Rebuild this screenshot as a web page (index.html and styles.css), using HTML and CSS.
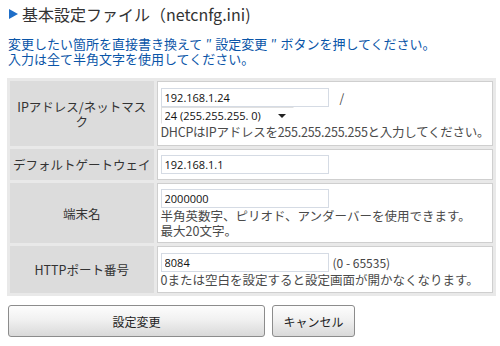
FILE: index.html
```html
<!DOCTYPE html>
<html lang="ja">
<head>
<meta charset="utf-8">
<link rel="stylesheet" href="styles.css">
</head>
<body>
<h1 class="title"><span class="tri"></span>基本設定ファイル（netcnfg.ini)</h1>
<p class="lead">変更したい箇所を直接書き換えて<span class="q">″</span>設定変更<span class="q">″</span>ボタンを押してください。<br>入力は全て半角文字を使用してください。</p>
<table class="form">
  <tr class="r-ip">
    <th>IPアドレス/ネットマス<br>ク</th>
    <td>
      <div class="line"><input class="txt" type="text" value="192.168.1.24"><span class="slash">/</span></div>
      <div class="line"><span class="sel"><select><option>24 (255.255.255. 0)</option></select><span class="arrow"></span></span></div>
      <div class="hint tight">DHCPはIPアドレスを255.255.255.255と入力してください。</div>
    </td>
  </tr>
  <tr class="r-gw">
    <th>デフォルトゲートウェイ</th>
    <td><div class="line"><input class="txt" type="text" value="192.168.1.1"></div></td>
  </tr>
  <tr class="r-name">
    <th>端末名</th>
    <td>
      <div class="line"><input class="txt" type="text" value="2000000"></div>
      <div class="hint">半角英数字、ピリオド、アンダーバーを使用できます。<br>最大20文字。</div>
    </td>
  </tr>
  <tr class="r-port">
    <th>HTTPポート番号</th>
    <td>
      <div class="line"><input class="txt" type="text" value="8084"><span class="range">(0 - 65535)</span></div>
      <div class="hint">0または空白を設定すると設定画面が開かなくなります。</div>
    </td>
  </tr>
</table>
<div class="buttons">
  <button class="btn btn-main" type="button">設定変更</button>
  <button class="btn btn-cancel" type="button">キャンセル</button>
</div>
</body>
</html>
```
FILE: styles.css
```css
* { box-sizing: border-box; }
html, body { margin: 0; background: #fff; }
body {
  padding: 4px 8px 0 8px;
  font-family: "Noto Sans CJK JP", "Noto Sans", sans-serif;
  color: #333;
}
.title {
  margin: 0;
  font-size: 16px;
  line-height: 20px;
  font-weight: normal;
  color: #333;
  display: flex;
  align-items: center;
}
.tri {
  width: 0; height: 0;
  border-top: 5px solid transparent;
  border-bottom: 5px solid transparent;
  border-left: 9px solid #1e6ec8;
  margin: 0 4px 0 1px;
}
.lead {
  margin: 12px 0 0 0;
  font-size: 13px;
  line-height: 15px;
  color: #0a55a8;
}
.q {
  display: inline-block;
  width: 13px;
  text-align: center;
}
.form {
  margin-top: 12px;
  width: 485px;
  border-collapse: separate;
  border-spacing: 3px;
  background: #e9e9e9;
  margin-left: -1px;
}
.form th {
  width: 146px;
  background: #dcdcdc;
  font-weight: normal;
  font-size: 12.5px;
  line-height: 15px;
  color: #333;
  text-align: center;
  vertical-align: middle;
  padding: 0 3px;
  white-space: nowrap;
}
.form td {
  background: #fff;
  border: 1px solid #cfcfcf;
  padding: 2px 3px;
  vertical-align: middle;
}
.r-ip { height: 65px; }
.r-gw { height: 31px; }
.r-name { height: 60px; }
.r-port { height: 47px; }
.line { display: flex; align-items: center; }
.txt {
  width: 168px;
  height: 19px;
  border: 1px solid #d5dbe4;
  padding: 1px 3px;
  font-family: "Open Sans", "Liberation Sans", sans-serif;
  font-size: 11px;
  color: #111;
  margin: 0;
}
.slash {
  margin-left: 11px;
  font-size: 12px;
  color: #444;
}
.range {
  margin-left: 4px;
  font-size: 12px;
  color: #444;
}
.sel { position: relative; display: inline-flex; }
.sel select {
  appearance: none;
  -webkit-appearance: none;
  width: 133px;
  height: 17px;
  border: 1px solid #e0e0e0;
  border-right-color: #fff;
  border-bottom-color: #fff;
  background: #fff;
  padding: 0 3px;
  font-family: "Open Sans", "Liberation Sans", sans-serif;
  font-size: 11px;
  color: #111;
  margin: 0;
}
.arrow {
  position: absolute;
  right: 8px;
  top: 7px;
  width: 0; height: 0;
  border-left: 4px solid transparent;
  border-right: 4px solid transparent;
  border-top: 4px solid #222;
}
.hint {
  font-size: 12.5px;
  line-height: 15px;
  color: #4a4a4a;
  white-space: nowrap;
}
.hint.tight { letter-spacing: -0.25px; }
.buttons {
  display: flex;
  gap: 7px;
  margin-top: 9px;
}
.btn {
  height: 32px;
  border: 1px solid #8c8c8c;
  border-radius: 3px;
  background: linear-gradient(#fdfdfd, #f1f1f1 45%, #d9d9d9);
  font-family: "Noto Sans CJK JP", sans-serif;
  font-size: 12px;
  color: #222;
  padding: 0;
}
.btn-main { width: 257px; }
.btn-cancel { width: 83px; }
```
